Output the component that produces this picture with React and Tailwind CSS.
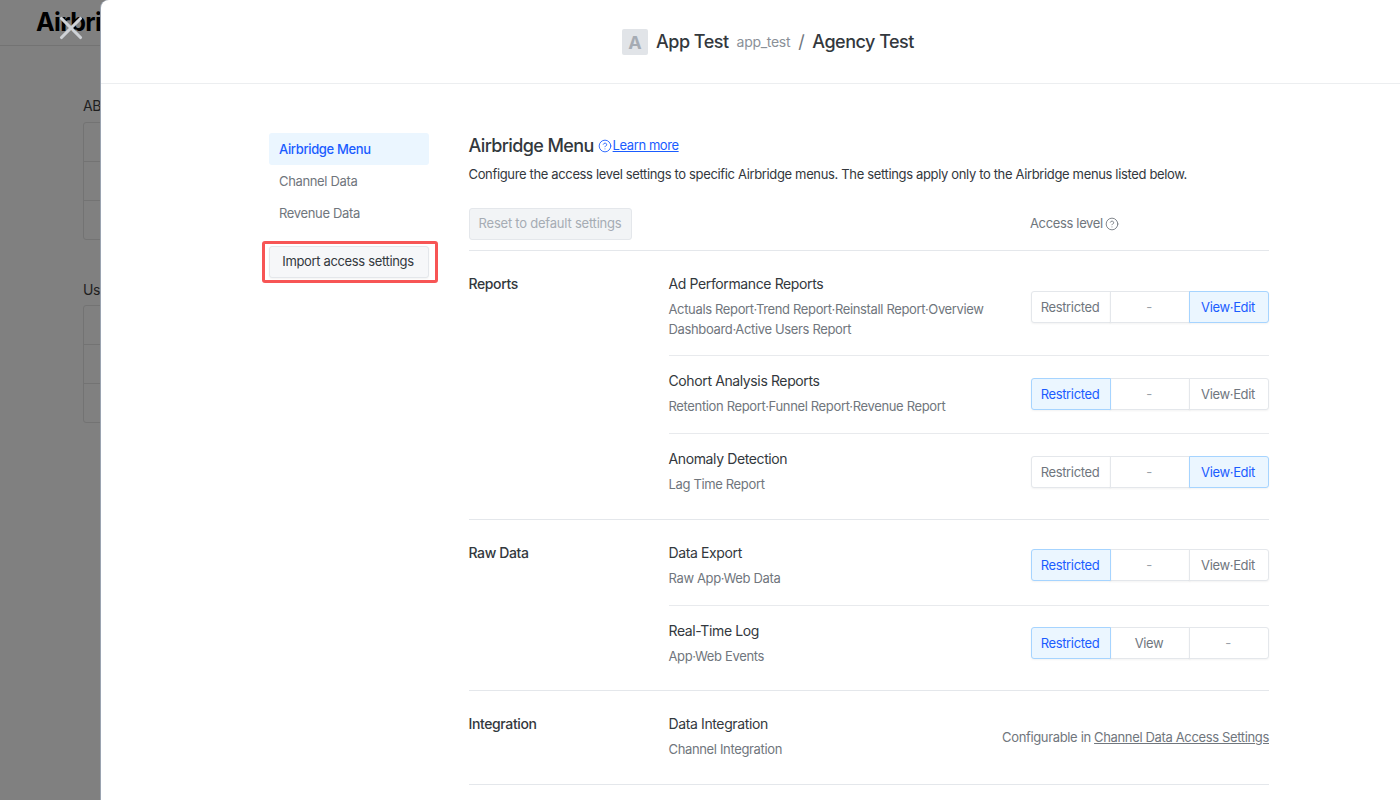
import React from 'react';
import { X, CircleHelp } from 'lucide-react';

const sections = [
  {
    name: 'Reports',
    rows: [
      { title: 'Ad Performance Reports', desc: ['Actuals Report·Trend Report·Reinstall Report·Overview', 'Dashboard·Active Users Report'], options: ['Restricted', '-', 'View·Edit'], active: 2 },
      { title: 'Cohort Analysis Reports', desc: ['Retention Report·Funnel Report·Revenue Report'], options: ['Restricted', '-', 'View·Edit'], active: 0 },
      { title: 'Anomaly Detection', desc: ['Lag Time Report'], options: ['Restricted', '-', 'View·Edit'], active: 2 },
    ],
  },
  {
    name: 'Raw Data',
    rows: [
      { title: 'Data Export', desc: ['Raw App·Web Data'], options: ['Restricted', '-', 'View·Edit'], active: 0 },
      { title: 'Real-Time Log', desc: ['App·Web Events'], options: ['Restricted', 'View', '-'], active: 0 },
    ],
  },
  {
    name: 'Integration',
    rows: [{ title: 'Data Integration', desc: ['Channel Integration'], link: true }],
  },
];

const AccessToggle = ({ options, active }) => (
  <div className="flex w-[238px] shrink-0">
    {options.map((opt, i) => {
      const isActive = i === active;
      return (
        <button
          key={opt + i}
          className={`h-8 flex-1 border pr-[2px] pt-[2px] text-[13px] shadow-[0_1px_2px_rgba(0,0,0,0.05)] ${i > 0 ? '-ml-px' : ''} ${i === 0 ? 'rounded-l-[3px]' : ''} ${i === 2 ? 'rounded-r-[3px]' : ''} ${
            isActive
              ? 'relative z-10 border-[#a6d4ff] bg-[#ebf6ff] text-[#1a5cff]'
              : opt === '-'
                ? 'border-[#e4e7eb] bg-white text-[#9aa1a9]'
                : 'border-[#e4e7eb] bg-white text-[#6f767e]'
          }`}
        >
          {opt}
        </button>
      );
    })}
  </div>
);

const Row = ({ row, last }) => (
  <div className={`flex items-center justify-between pt-[15px] ${row.desc.length > 1 ? 'pb-4' : 'pb-[17px]'} ${last ? '' : 'border-b border-[#e8eaed]'}`}>
    <div>
      <div className="text-sm leading-5 tracking-[-0.38px] text-[#33383d]">{row.title}</div>
      <div className="mt-[5px] text-[13px] leading-5 text-[#70767d]">
        {row.desc.map((line) => (
          <div key={line}>{line}</div>
        ))}
      </div>
    </div>
    {row.link ? (
      <div className="pt-[2px] text-[13px] text-[#70767d]">
        Configurable in <span className="underline">Channel Data Access Settings</span>
      </div>
    ) : (
      <AccessToggle options={row.options} active={row.active} />
    )}
  </div>
);

export default function App() {
  return (
    <div className="relative h-screen overflow-hidden bg-[#808080] font-['Inter',sans-serif] tracking-[-0.35px]">
      {/* page behind the dimmed overlay */}
      <div className="flex h-[46px] items-center border-b border-[#737373] pl-9">
        <span className="text-[25px] font-bold tracking-tight text-black">Airbridge</span>
      </div>
      <div className="w-[300px] pl-[83px]">
        <div className="mt-[50px] text-sm leading-5 text-[#1f1f1f]">ABC</div>
        <div className="mt-[6px] h-[118px] rounded-[3px] border border-[#737373]">
          <div className="h-[39px] border-b border-[#737373]" />
          <div className="h-[39px] border-b border-[#737373]" />
        </div>
        <div className="mt-10 text-sm leading-5 text-[#1f1f1f]">User</div>
        <div className="mt-[5px] h-[118px] rounded-[3px] border border-[#737373]">
          <div className="h-[39px] border-b border-[#737373]" />
          <div className="h-[39px] border-b border-[#737373]" />
        </div>
      </div>

      <button className="absolute left-[52px] top-[9px] z-10 text-[#cfd2d6]">
        <X size={38} strokeWidth={2} />
      </button>

      {/* modal */}
      <div className="absolute inset-y-0 left-[101px] right-0 z-0 rounded-tl-lg bg-white shadow-[-1px_0_0_#9aa3b0]">
        <div className="flex h-[84px] items-center justify-center gap-2 border-b border-[#eceef0] pl-[35px] pt-px text-[#33383d]">
          <div className="flex h-[26px] w-[26px] items-center justify-center rounded-[2px] bg-[#e1e4e8] text-[18px] font-bold tracking-normal text-[#a6acb4]">A</div>
          <span className="text-lg font-medium tracking-[-0.5px]">App Test</span>
          <span className="text-sm tracking-[-0.3px] text-[#8a9098]">app_test</span>
          <span className="text-lg text-[#6f767e]">/</span>
          <span className="text-lg font-medium tracking-[-0.5px]">Agency Test</span>
        </div>

        <div className="flex pl-[168px] pt-[49px]">
          <nav className="w-[160px] shrink-0 text-[13px]">
            <div className="flex h-8 items-center rounded-[3px] bg-[#ebf6ff] px-[10px] pt-px font-medium text-[#1a5cff]">Airbridge Menu</div>
            <div className="flex h-8 items-center px-[10px] pt-px text-[#70767d]">Channel Data</div>
            <div className="flex h-8 items-center px-[10px] pt-px text-[#70767d]">Revenue Data</div>
            <div className="relative mt-[17px]">
              <button className="h-8 w-full rounded-[3px] border border-[#e4e7eb] bg-[#f6f7f9] pr-[2px] text-[13px] text-[#33383d] shadow-[0_1px_2px_rgba(0,0,0,0.05)]">
                Import access settings
              </button>
              <div className="absolute -inset-y-[5px] -left-[7px] -right-[9px] rounded-[3px] border-[3px] border-[#f75555]" />
            </div>
          </nav>

          <main className="ml-[39.5px] w-[800.5px] shrink-0">
            <div className="flex items-center">
              <h2 className="text-lg font-medium leading-[26px] tracking-[-0.62px] text-[#33383d]">Airbridge Menu</h2>
              <CircleHelp size={14} strokeWidth={1.5} className="ml-[4px] text-[#1a5cff]" />
              <a className="ml-px text-[13px] tracking-[-0.42px] text-[#1a5cff] underline">Learn more</a>
            </div>
            <p className="mt-[5px] text-[13px] leading-5 text-[#33383d]">
              Configure the access level settings to specific Airbridge menus. The settings apply only to the Airbridge menus listed below.
            </p>
            <div className="mt-6 flex h-[43px] items-start justify-between border-b border-[#e4e7eb]">
              <button className="h-8 w-[163px] rounded-[3px] border border-[#e4e7eb] bg-[#f2f4f6] text-[13px] tracking-[-0.22px] text-[#a6acb4]">
                Reset to default settings
              </button>
              <div className="flex h-8 w-[239px] items-center gap-[2px] text-[13px] text-[#70767d]">
                Access level <CircleHelp size={14} strokeWidth={1.5} />
              </div>
            </div>

            {sections.map((section) => (
              <section key={section.name} className="flex border-b border-[#e4e7eb] pb-[7.5px] pt-2">
                <div className="w-[200px] shrink-0 pt-[15px] text-sm font-medium leading-5 tracking-[-0.38px] text-[#33383d]">{section.name}</div>
                <div className="flex-1">
                  {section.rows.map((row, i) => (
                    <Row key={row.title} row={row} last={i === section.rows.length - 1} />
                  ))}
                </div>
              </section>
            ))}
          </main>
        </div>
      </div>
    </div>
  );
}
